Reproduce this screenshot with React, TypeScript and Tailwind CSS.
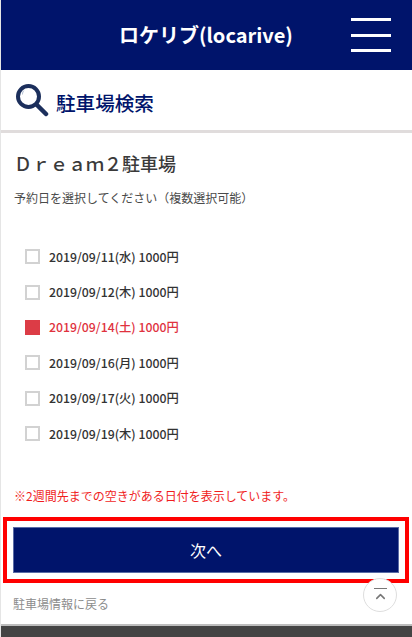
import { ChevronUp } from 'lucide-react'

const dates = [
  { label: '2019/09/11(水) 1000円', checked: false },
  { label: '2019/09/12(木) 1000円', checked: false },
  { label: '2019/09/14(土) 1000円', checked: true },
  { label: '2019/09/16(月) 1000円', checked: false },
  { label: '2019/09/17(火) 1000円', checked: false },
  { label: '2019/09/19(木) 1000円', checked: false },
]

function SearchIcon() {
  return (
    <svg width="34" height="34" viewBox="0 0 34 34" fill="none">
      <circle cx="13.5" cy="13.5" r="10.5" stroke="#1c2f5c" strokeWidth="4" />
      <path d="M21.5 21.5L31 31" stroke="#1c2f5c" strokeWidth="4.5" strokeLinecap="round" />
      <path d="M7.5 11c0-1 .3-2 1-3" stroke="#9fb0c8" strokeWidth="1" strokeLinecap="round" />
    </svg>
  )
}

export default function App() {
  return (
    <div className="relative flex h-[637px] w-[412px] flex-col overflow-hidden border-l border-[#e5e5e5] bg-white font-['Noto_Sans_CJK_JP','Noto_Sans',sans-serif] text-[#333]">
      <header className="flex h-[70px] shrink-0 items-center bg-[#00146b] text-white">
        <h1 className="ml-[118px] text-[20px] leading-none font-bold">ロケリブ(locarive)</h1>
        <div className="ml-auto mr-[21px] flex h-[34px] w-10 flex-col justify-between">
          <span className="h-[3px] bg-white" />
          <span className="h-[3px] bg-white" />
          <span className="h-[3px] bg-white" />
        </div>
      </header>

      <div className="flex h-[63px] shrink-0 items-center gap-[7px] border-b-[3px] border-[#e0dcdc] pl-[14px] pb-[1px]">
        <SearchIcon />
        <h2 className="pt-[7px] text-[19.6px] leading-none font-medium text-[#00146b]">駐車場検索</h2>
      </div>

      <div className="flex-1 pl-[14px]">
        <p className="mt-[18px] -ml-[1px] text-[18px] leading-[24px] font-medium text-[#3a3a3a]">Ｄｒｅａｍ２駐車場</p>
        <p className="mt-[14px] -ml-[1px] text-[12px] leading-[18px] text-[#4a4a4a]">予約日を選択してください（複数選択可能）</p>

        <ul className="mt-[32px] ml-[10px]">
          {dates.map((d) => (
            <li key={d.label} className="flex h-[35.4px] items-center gap-[9px]">
              {d.checked ? (
                <span className="h-[15px] w-[15px] bg-[#dc3c46]" />
              ) : (
                <span className="h-[15px] w-[15px] border-2 border-[#d2d2d2]" />
              )}
              <span className={`text-[12.3px] leading-none font-medium ${d.checked ? 'text-[#e0323e]' : 'text-[#333]'}`}>
                {d.label}
              </span>
            </li>
          ))}
        </ul>

        <p className="mt-[37px] -ml-[1px] text-[12px] leading-[16px] text-[#f01e1e]">※2週間先までの空きがある日付を表示しています。</p>
      </div>

      <div className="ml-[2px] mr-[3px] shrink-0 border-[4px] border-[#ff0000] px-[6px] py-[6px]">
        <button className="flex h-[46px] w-full items-center justify-center border border-[#5a6ba5] bg-[#00146b] text-[16px] text-white">
          次へ
        </button>
      </div>

      <p className="h-[41px] shrink-0 pl-[12px] pt-[12px] text-[12px] leading-[18px] text-[#8c8c8c]">駐車場情報に戻る</p>
      <div className="h-[13px] shrink-0 border-t-2 border-[#bdbdbd] bg-[#444]" />

      <div className="absolute top-[578px] left-[362px] flex h-[34px] w-[34px] flex-col items-center justify-center rounded-full border border-[#dedede] bg-white">
        <span className="h-[1.5px] w-[13px] bg-[#777]" />
        <ChevronUp size={15} strokeWidth={2.5} className="-mb-[2px] text-[#777]" />
      </div>
    </div>
  )
}
